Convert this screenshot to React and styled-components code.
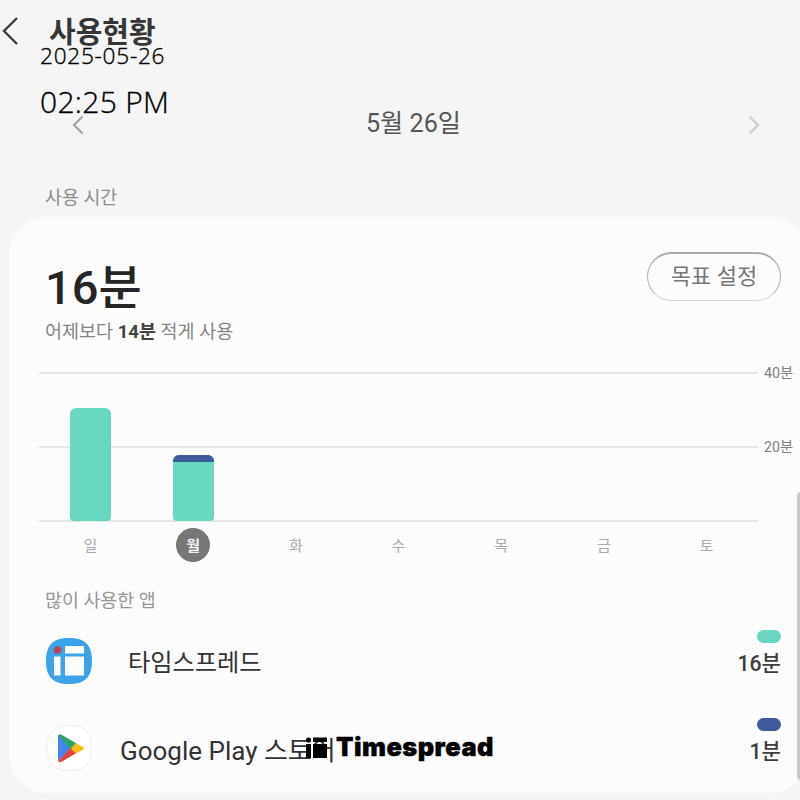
import styled, { createGlobalStyle } from "styled-components";

const GlobalStyle = createGlobalStyle`
    * {
        box-sizing: border-box;
    }

    body {
        margin: 0;
        background-color: #f5f5f5;
        font-family: Roboto, "Noto Sans CJK KR", sans-serif;
    }
`;

const Screen = styled.main`
    position: relative;
    width: 800px;
    height: 800px;
    overflow: hidden;
    background-color: #f5f5f5;
`;

const Header = styled.header`
    display: flex;
    align-items: center;
    height: 62px;
    padding-left: 1px;
    gap: 30px;
`;
const Title = styled.h1`
    margin: 0;
    padding-top: 3px;
    font-size: 29px;
    line-height: 40px;
    font-weight: 700;
    color: #363636;
`;

const DateNav = styled.nav`
    display: flex;
    align-items: center;
    justify-content: space-between;
    height: 124px;
    padding: 2px 40px 0 72px;
`;
const CurrentDate = styled.span`
    margin: 0 5px 3px 0;
    font-size: 25.2px;
    line-height: 36px;
    color: #555555;
`;

const SectionLabel = styled.h2`
    margin: 0;
    font-size: 18.4px;
    line-height: 23px;
    font-weight: 400;
    color: #8d8d8d;
`;
const UsageLabel = styled(SectionLabel)`
    height: 31px;
    padding-left: 45px;
`;

const Card = styled.section`
    width: 799px;
    height: 576px;
    margin-left: 9px;
    padding: 35px 27px 0 30px;
    border-radius: 38px;
    background-color: #fcfcfc;
`;

const Summary = styled.div`
    display: flex;
    justify-content: space-between;
    height: 98px;
    padding: 0 0 0 6px;
`;
const Total = styled.div`
    margin-top: 8px;
    font-size: 47px;
    line-height: 56px;
    font-weight: 500;
    color: #252525;
`;
const Compare = styled.p`
    margin: 5px 0 0;
    font-size: 18.5px;
    line-height: 22px;
    color: #858585;

    & b {
        font-weight: 700;
        color: #444444;
    }
`;
const GoalButton = styled.button`
    width: 134px;
    height: 49px;
    padding: 0;
    border: 1px solid #b0b0b0;
    border-top: 2px solid #acacac;
    border-bottom-color: #d5d5d5;
    border-radius: 25px;
    background-color: transparent;
    font-family: inherit;
    font-size: 22px;
    line-height: 30px;
    color: #777777;
`;

const Chart = styled.div`
    display: grid;
    grid-template-columns: 719px 1fr;
    column-gap: 6px;
    margin-top: 22px;
`;
const Plot = styled.div`
    display: grid;
    grid-template-columns: repeat(7, 1fr);
    align-items: end;
    justify-items: center;
    height: 150px;
    border-bottom: 2px solid #e6e6e6;
    background-image: linear-gradient(#e6e6e6, #e6e6e6),
        linear-gradient(#e6e6e6, #e6e6e6);
    background-size: 100% 2px;
    background-repeat: no-repeat;
    background-position: 0 0, 0 74px;
`;
const Bar = styled.div`
    width: 41px;
    margin-bottom: -1px;
    border-radius: 6px 6px 4px 4px;
    overflow: hidden;
    background-color: #69d8c1;
`;
const BarCap = styled.div`
    height: 7px;
    background-color: #3e5c9c;
`;
const Scale = styled.div`
    display: flex;
    flex-direction: column;
    gap: 54px;
    margin-top: -9px;
    font-size: 14.3px;
    line-height: 20px;
    color: #808080;
    white-space: nowrap;
`;
const Days = styled.div`
    display: grid;
    grid-template-columns: repeat(7, 1fr);
    justify-items: center;
    width: 719px;
    margin-top: 6px;
`;
const Day = styled.span`
    width: 34px;
    height: 34px;
    padding-top: 1px;
    border-radius: 50%;
    font-size: 15px;
    line-height: 34px;
    text-align: center;
    font-weight: ${(props) => (props.$active ? 700 : 400)};
    color: ${(props) => (props.$active ? "#f4f4f4" : "#aaaaaa")};
    background-color: ${(props) => (props.$active ? "#777777" : "transparent")};
`;

const Apps = styled.div`
    padding: 27px 0 0 7px;
`;
const AppsLabel = styled(SectionLabel)`
    height: 22px;
    margin-left: -1px;
    color: #969696;
`;
const AppRow = styled.div`
    display: flex;
    align-items: center;
    height: 88px;
    padding-top: ${(props) => props.$offset || 0}px;
`;
const AppName = styled.span`
    flex: 1;
    margin-left: ${(props) => props.$gap}px;
    padding-top: ${(props) => props.$drop}px;
    font-size: ${(props) => props.$size}px;
    line-height: 34px;
    color: #333333;
`;
const AppTime = styled.div`
    display: flex;
    flex-direction: column;
    align-items: flex-end;
    gap: 7px;
    margin-bottom: 13px;
    font-size: 21.2px;
    line-height: 28px;
    font-weight: 500;
    color: #3d3d3d;
`;
const Pill = styled.span`
    width: 24px;
    height: 13px;
    border-radius: 7px;
    background-color: ${(props) => props.$color};
`;

const Stamp = styled.div`
    position: absolute;
    top: 40px;
    left: 40px;
    font-family: "Open Sans", sans-serif;
    font-weight: 300;
    color: #000000;
    white-space: nowrap;
    -webkit-text-stroke: 0.35px #000000;
`;
const StampDate = styled.div`
    font-size: 22.6px;
    line-height: 32px;
    letter-spacing: 0.75px;
`;
const StampTime = styled.div`
    margin-top: 10px;
    font-size: 30px;
    line-height: 40px;
    letter-spacing: 0.3px;
`;

const Watermark = styled.div`
    position: absolute;
    top: 731px;
    left: 305px;
    display: flex;
    align-items: center;
    gap: 9px;
    height: 32px;
    font-family: Inter, sans-serif;
    font-size: 25.4px;
    font-weight: 900;
    line-height: 32px;
    letter-spacing: 0.5px;
    color: #000000;
    -webkit-text-stroke: 0.4px #000000;
`;
const EdgeHandle = styled.div`
    position: absolute;
    top: 492px;
    right: -5px;
    width: 8px;
    height: 288px;
    border-radius: 5px;
    background-color: #c9c9c9;
`;

const days = [
    { name: "일", height: 113 },
    { name: "월", height: 66, cap: true, active: true },
    { name: "화" },
    { name: "수" },
    { name: "목" },
    { name: "금" },
    { name: "토" },
];

function BackIcon() {
    return (
        <svg width="18" height="30" viewBox="0 0 18 30" fill="none">
            <path d="M16 2 3 15 16 28" stroke="#3c3c3c" strokeWidth="2.4" />
        </svg>
    );
}

function Arrow({ next }) {
    return (
        <svg width="12" height="20" viewBox="0 0 12 20" fill="none">
            <path
                d={next ? "M1.5 1.5 10 10 1.5 18.5" : "M10.5 1.5 2 10 10.5 18.5"}
                stroke={next ? "#cdcdcd" : "#a5a5a5"}
                strokeWidth="2.2"
            />
        </svg>
    );
}

function TimespreadIcon() {
    return (
        <svg width="46" height="46" viewBox="0 0 46 46">
            <path
                d="M23 0C39 0 46 7 46 23S39 46 23 46 0 39 0 23 7 0 23 0Z"
                fill="#3ba4e8"
            />
            <path d="M19 8h19v7.500H19zM8 18.500h6.500v19H8zM19 18.500h19v19H19z" fill="#fcfcfc" />
            <circle cx="11.500" cy="12" r="3.800" fill="#b94355" />
        </svg>
    );
}

function PlayIcon() {
    return (
        <svg width="46" height="48" viewBox="0 0 46 48">
            <path
                d="M23 1.500C39 1.500 45 8 45 24S39 46.500 23 46.500 1 40 1 24 7 1.500 23 1.500Z"
                fill="#ffffff"
                stroke="#ececec"
            />
            <path d="M12 12.500v24.500L25 24.500 13.500 10.500Q12 11 12 12.500Z" fill="#4285ee" />
            <path d="M12.200 11.500Q13.500 9.500 16 11L30.500 19.500 25 25.500Z" fill="#34a164" />
            <path d="M12.200 37Q13.500 39 16 37.600L30.500 29 25 23.500Z" fill="#df453e" />
            <path d="M30 19.200 36.500 22.800Q38.500 24.500 36.500 26L30 29.600 24.800 24.500Z" fill="#fbbc12" />
        </svg>
    );
}

function WatermarkLogo() {
    return (
        <svg width="22" height="22" viewBox="0 0 22 22">
            <circle cx="3.500" cy="4" r="2.600" />
            <path d="M8 1.500h14V6H8zM1 8h5v14H1zM8 8h14v14H8z" />
        </svg>
    );
}

function App() {
    return (
        <>
            <GlobalStyle />
            <Screen>
                <Header>
                    <BackIcon />
                    <Title>사용현황</Title>
                </Header>
                <DateNav>
                    <Arrow />
                    <CurrentDate>5월 26일</CurrentDate>
                    <Arrow next />
                </DateNav>
                <UsageLabel>사용 시간</UsageLabel>
                <Card>
                    <Summary>
                        <div>
                            <Total>16분</Total>
                            <Compare>
                                어제보다 <b>14분</b> 적게 사용
                            </Compare>
                        </div>
                        <GoalButton>목표 설정</GoalButton>
                    </Summary>
                    <Chart>
                        <Plot>
                            {days.map((day) =>
                                day.height ? (
                                    <Bar key={day.name} style={{ height: day.height }}>
                                        {day.cap && <BarCap />}
                                    </Bar>
                                ) : (
                                    <span key={day.name} />
                                )
                            )}
                        </Plot>
                        <Scale>
                            <span>40분</span>
                            <span>20분</span>
                        </Scale>
                    </Chart>
                    <Days>
                        {days.map((day) => (
                            <Day key={day.name} $active={day.active}>
                                {day.name}
                            </Day>
                        ))}
                    </Days>
                    <Apps>
                        <AppsLabel>많이 사용한 앱</AppsLabel>
                        <AppRow $offset={11}>
                            <TimespreadIcon />
                            <AppName $gap={36} $size={24.2} $drop={5}>
                                타임스프레드
                            </AppName>
                            <AppTime>
                                <Pill $color="#69d5c0" />
                                16분
                            </AppTime>
                        </AppRow>
                        <AppRow $offset={10}>
                            <PlayIcon />
                            <AppName $gap={28} $size={26} $drop={6}>
                                Google Play 스토어
                            </AppName>
                            <AppTime>
                                <Pill $color="#3e5a9b" />
                                1분
                            </AppTime>
                        </AppRow>
                    </Apps>
                </Card>
                <Stamp>
                    <StampDate>2025-05-26</StampDate>
                    <StampTime>02:25 PM</StampTime>
                </Stamp>
                <Watermark>
                    <WatermarkLogo />
                    Timespread
                </Watermark>
                <EdgeHandle />
            </Screen>
        </>
    );
}

export default App;
